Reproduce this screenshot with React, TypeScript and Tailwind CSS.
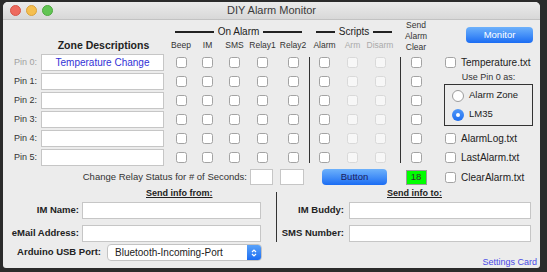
import React from "react";

const boxCols = [
  { col: "col-start-3", label: "Beep" },
  { col: "col-start-4", label: "IM" },
  { col: "col-start-5", label: "SMS" },
  { col: "col-start-6", label: "Relay1" },
  { col: "col-start-7", label: "Relay2" },
  { col: "col-start-9", label: "Alarm" },
  { col: "col-start-10", label: "Arm", off: true },
  { col: "col-start-11", label: "Disarm", off: true },
  { col: "col-start-13", label: "" },
];

const pinRows = ["row-start-3", "row-start-4", "row-start-5", "row-start-6", "row-start-7", "row-start-8"];

function Check({ off }: { off?: boolean }) {
  return (
    <div
      className={
        off
          ? "h-[11px] w-[11px] rounded-[2.5px] border border-[#d9d9d9] bg-[#f7f7f7]"
          : "h-[11px] w-[11px] rounded-[2.5px] border border-[#a3a3a3] bg-white"
      }
    />
  );
}

function FileCheck({ label }: { label: string }) {
  return (
    <div className="flex h-full items-center gap-[5px] pl-[5px] text-[10px] text-[#222]">
      <Check />
      <span>{label}</span>
    </div>
  );
}

function Line({ side }: { side: "l" | "r" }) {
  return <div className={side === "l" ? "h-[1.5px] flex-1 bg-[#222]" : "h-[1.5px] flex-1 bg-[#222]"} />;
}

export default function App() {
  return (
    <div className="h-[272px] w-[547px] bg-[#2b2b2b] pl-[3px] pt-[2px] font-['Liberation_Sans',Arial,sans-serif] text-[#222]">
      <div className="flex h-[266px] w-[537px] flex-col overflow-hidden rounded-t-[5px] rounded-b-[3px] bg-[#ececec]">
        {/* title bar */}
        <div className="grid h-[18px] shrink-0 grid-cols-[1fr_auto_1fr] items-center border-b border-[#c2c2c2] bg-gradient-to-b from-[#ebebeb] to-[#d8d8d8]">
          <div className="flex gap-[5px] pl-[7px]">
            <div className="h-[11px] w-[11px] rounded-full border border-[#d65447] bg-[#ee6a5e]" />
            <div className="h-[11px] w-[11px] rounded-full border border-[#d9a13a] bg-[#f5bf4f]" />
            <div className="h-[11px] w-[11px] rounded-full border border-[#4ea83f] bg-[#62c554]" />
          </div>
          <div className="text-[11px] text-[#3a3a3a]">DIY Alarm Monitor</div>
          <div />
        </div>

        {/* upper grid */}
        <div className="grid shrink-0 grid-cols-[36px_129px_26px_27px_27px_29px_32px_1px_29px_27px_28px_12px_20px_14px_100px] grid-rows-[18px_15px_19px_19px_19px_19px_19px_19px_20px]">
          <div className="col-span-5 col-start-3 row-start-1 flex items-center gap-[4px] px-[7px] pt-[6px]">
            <Line side="l" />
            <span className="text-[10px] leading-[12px]">On Alarm</span>
            <Line side="r" />
          </div>
          <div className="col-span-3 col-start-9 row-start-1 flex items-center gap-[4px] pl-[6px] pr-[2px] pt-[6px]">
            <Line side="l" />
            <span className="text-[10px] leading-[12px]">Scripts</span>
            <Line side="r" />
          </div>
          <div className="col-start-13 row-span-2 row-start-1 flex flex-col items-center justify-center whitespace-nowrap text-[8.5px] leading-[11px] text-[#333]">
            <span>Send</span>
            <span>Alarm</span>
            <span>Clear</span>
          </div>
          <div className="col-start-15 row-span-2 row-start-1 flex justify-end pr-[7px] pt-[7px]">
            <div className="flex h-[16px] w-[67px] items-center justify-center rounded-[4px] bg-gradient-to-b from-[#6db1fb] to-[#1a6cf3] text-[9.5px] text-white">
              Monitor
            </div>
          </div>

          <div className="col-start-2 row-start-2 flex items-center justify-center whitespace-nowrap text-[10.5px] font-bold">
            Zone Descriptions
          </div>
          {boxCols.map((c) =>
            c.label ? (
              <div
                key={c.label}
                className={`${c.col} row-start-2 flex items-center justify-center whitespace-nowrap text-[8.5px] ${c.off ? "text-[#aaa]" : "text-[#333]"}`}
              >
                {c.label}
              </div>
            ) : null
          )}

          {pinRows.map((r, i) => (
            <React.Fragment key={r}>
              <div className={`col-start-1 ${r} flex items-center justify-end pr-[2px] text-[9px] ${i === 0 ? "text-[#a0a0a0]" : "text-[#333]"}`}>
                Pin {i}:
              </div>
              <div className={`col-start-2 ${r} flex items-center pl-[2px]`}>
                <div className="flex h-[17px] w-[123px] items-center justify-center border border-[#c6c6c6] bg-white text-[10px] text-[#3232d6]">
                  {i === 0 ? "Temperature Change" : ""}
                </div>
              </div>
              {boxCols.map((c) => (
                <div key={c.col} className={`${c.col} ${r} flex items-center justify-center`}>
                  <Check off={c.off} />
                </div>
              ))}
            </React.Fragment>
          ))}

          <div className="col-start-8 row-span-6 row-start-3 my-[4px] w-px bg-[#333]" />
          <div className="col-start-12 row-span-6 row-start-3 my-[4px] flex justify-center">
            <div className="w-px bg-[#333]" />
          </div>

          {/* right panel */}
          <div className="col-start-15 row-start-3">
            <FileCheck label="Temperature.txt" />
          </div>
          <div className="col-start-15 row-span-3 row-start-4 flex flex-col pl-[4px]">
            <div className="w-[89px] text-center text-[9px] leading-[11px] text-[#333]">Use Pin 0 as:</div>
            <div className="mt-[1px] flex h-[42px] w-[89px] flex-col border border-[#333] pl-[7px] pt-[1px]">
              <div className="flex h-[19px] items-center gap-[5px] text-[9.5px]">
                <div className="h-[12px] w-[12px] rounded-full border border-[#9c9c9c] bg-white" />
                <span>Alarm Zone</span>
              </div>
              <div className="flex h-[19px] items-center gap-[5px] text-[9.5px]">
                <div className="flex h-[12px] w-[12px] items-center justify-center rounded-full bg-gradient-to-b from-[#4f97f8] to-[#1f6ff0]">
                  <div className="h-[4px] w-[4px] rounded-full bg-white" />
                </div>
                <span>LM35</span>
              </div>
            </div>
          </div>
          <div className="col-start-15 row-start-7">
            <FileCheck label="AlarmLog.txt" />
          </div>
          <div className="col-start-15 row-start-8">
            <FileCheck label="LastAlarm.txt" />
          </div>

          {/* relay row */}
          <div className="col-span-5 col-start-1 row-start-9 flex items-center justify-end whitespace-nowrap pr-[1px] text-[9.5px] text-[#333]">
            Change Relay Status for # of Seconds:
          </div>
          <div className="col-start-6 row-start-9 flex items-center pl-[2px]">
            <div className="h-[16px] w-[23px] border border-[#c6c6c6] bg-white" />
          </div>
          <div className="col-start-7 row-start-9 flex items-center pl-[3px]">
            <div className="h-[16px] w-[24px] border border-[#c6c6c6] bg-white" />
          </div>
          <div className="col-span-3 col-start-9 row-start-9 flex items-center pl-[12px]">
            <div className="flex h-[16px] w-[65px] items-center justify-center rounded-[4px] bg-gradient-to-b from-[#6db1fb] to-[#1a6cf3] text-[9.5px] text-[#1b1b5e]">
              Button
            </div>
          </div>
          <div className="col-start-13 row-start-9 flex items-center justify-center">
            <div className="flex h-[15px] w-[21px] shrink-0 items-center justify-center border border-[#9a9a9a] bg-[#00ff00] text-[9.5px] text-[#333]">
              18
            </div>
          </div>
          <div className="col-start-15 row-start-9">
            <FileCheck label="ClearAlarm.txt" />
          </div>
        </div>

        {/* lower section */}
        <div className="grid flex-1 grid-cols-[273px_1px_1fr]">
          <div className="flex flex-col">
            <div className="pl-[143px] text-[9px] font-bold leading-[12px] underline">Send info from:</div>
            <div className="mt-[3px] flex h-[17px] items-center">
              <div className="w-[77px] pr-[1px] text-right text-[9.5px] font-bold">IM Name:</div>
              <div className="ml-[2px] h-[17px] w-[179px] border border-[#c6c6c6] bg-white" />
            </div>
            <div className="mt-[6px] flex h-[17px] items-center">
              <div className="w-[77px] pr-[1px] text-right text-[9.5px] font-bold">eMail Address:</div>
              <div className="ml-[2px] h-[17px] w-[179px] border border-[#c6c6c6] bg-white" />
            </div>
            <div className="mt-[2px] flex h-[17px] items-center">
              <div className="w-[99px] whitespace-nowrap pr-[1px] text-right text-[9.5px] font-bold">Arduino USB Port:</div>
              <div className="ml-[5px] flex h-[17px] w-[155px] items-stretch rounded-[4px] border border-[#c3c3c3] bg-white">
                <div className="flex flex-1 items-center pl-[7px] text-[10px] text-[#222]">Bluetooth-Incoming-Port</div>
                <div className="flex w-[14px] items-center justify-center rounded-r-[3px] bg-gradient-to-b from-[#5aa2f9] to-[#1c6df2]">
                  <svg width="6" height="10" viewBox="0 0 6 10" fill="none" stroke="white" strokeWidth="1.2">
                    <path d="M1 4 L3 2 L5 4" />
                    <path d="M1 6 L3 8 L5 6" />
                  </svg>
                </div>
              </div>
            </div>
          </div>
          <div className="mt-[5px] h-[50px] w-px bg-[#333]" />
          <div className="flex flex-col">
            <div className="pl-[110px] text-[9px] font-bold leading-[12px] underline">Send info to:</div>
            <div className="mt-[3px] flex h-[17px] items-center">
              <div className="w-[68px] pr-[1px] text-right text-[9.5px] font-bold">IM Buddy:</div>
              <div className="ml-[4px] h-[17px] w-[182px] border border-[#c6c6c6] bg-white" />
            </div>
            <div className="mt-[6px] flex h-[17px] items-center">
              <div className="w-[68px] whitespace-nowrap pr-[1px] text-right text-[9.5px] font-bold">SMS Number:</div>
              <div className="ml-[4px] h-[17px] w-[182px] border border-[#c6c6c6] bg-white" />
            </div>
            <div className="mt-[14px] pr-[3px] text-right text-[9px] leading-[12px] text-[#4a4ae6]">Settings Card</div>
          </div>
        </div>
      </div>
    </div>
  );
}
